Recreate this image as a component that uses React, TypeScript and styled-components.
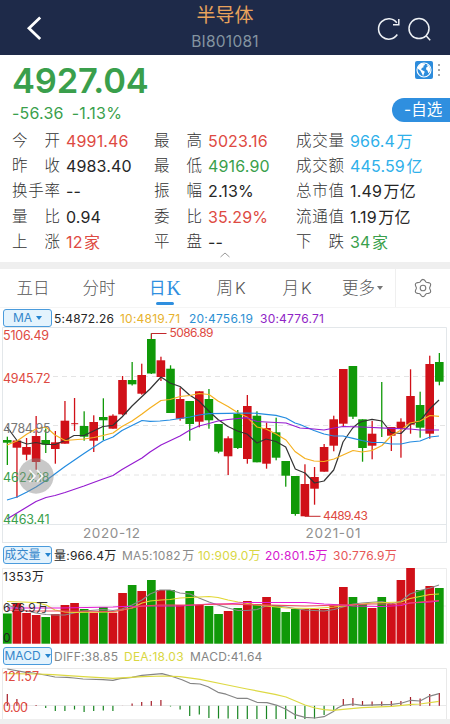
import React from "react";
import styled, { createGlobalStyle } from "styled-components";

const GlobalStyle = createGlobalStyle`
  * { box-sizing: border-box; }
  body { margin: 0; background: #fff; }
`;

const RED = "#de4a42";
const GREEN = "#3a9f4c";
const INK = "#262626";
const SKY = "#2eb0ea";
const BLUE = "#2f8fdf";
const UP = "#d01018";
const DOWN = "#109908";

const Screen = styled.div`
  width: 450px;
  height: 724px;
  overflow: hidden;
  display: flex;
  flex-direction: column;
  background: #fff;
  font-family: Inter, "Noto Sans CJK SC", sans-serif;
  color: ${INK};
`;

const Header = styled.header`
  height: 55px;
  flex: none;
  display: grid;
  grid-template-columns: 80px 1fr 80px;
  background: #1e2a49;
`;

const BackButton = styled.div`
  padding: 16px 0 0 26px;
`;

const TitleBlock = styled.div`
  display: flex;
  flex-direction: column;
  align-items: center;
`;

const Title = styled.div`
  margin-top: 4px;
  height: 24px;
  line-height: 24px;
  font-size: 19px;
  color: #e8a25c;
`;

const Code = styled.div`
  margin-top: 4px;
  height: 20px;
  line-height: 20px;
  font-size: 15.5px;
  letter-spacing: 0.25px;
  color: #8494a0;
`;

const HeaderActions = styled.div`
  display: flex;
  gap: 3px;
  padding: 16px 0 0 6px;
`;

const Summary = styled.section`
  height: 73px;
  flex: none;
  display: flex;
  justify-content: space-between;
  padding-left: 12px;
`;

const PriceBlock = styled.div`
  color: ${GREEN};
`;

const Price = styled.div`
  margin-top: 5px;
  height: 42px;
  line-height: 42px;
  font-size: 34.5px;
  font-weight: 600;
  letter-spacing: -0.2px;
`;

const Change = styled.div`
  display: flex;
  gap: 8px;
  height: 22px;
  line-height: 22px;
  font-size: 16px;
  letter-spacing: 0.2px;
`;

const SideTools = styled.div`
  display: flex;
  flex-direction: column;
  align-items: flex-end;
`;

const ToolPair = styled.div`
  display: flex;
  align-items: center;
  gap: 4px;
  height: 18px;
  margin: 6px 9px 0 0;
`;

const WatchPill = styled.div`
  margin-top: 19px;
  width: 58px;
  height: 24px;
  padding-left: 12px;
  border-radius: 12px 0 0 12px;
  background: ${BLUE};
  color: #fff;
  font-size: 15.5px;
  line-height: 24px;
  white-space: nowrap;
`;

const Quotes = styled.section`
  height: 134px;
  flex: none;
  display: grid;
  grid-template-columns: 142px 142px 1fr;
  grid-template-rows: repeat(5, 25.2px);
  padding-left: 12px;
`;

const Quote = styled.div`
  display: flex;
  align-items: center;
  height: 26px;
  font-size: 16px;
  line-height: 26px;
  white-space: nowrap;
`;

const QuoteLabel = styled.div`
  width: 48px;
  margin-right: 6px;
  display: flex;
  justify-content: space-between;
  font-size: 15.5px;
  font-weight: 300;
  color: #333;
`;

const QuoteValue = styled.div<{ $color?: string }>`
  color: ${(p) => p.$color || INK};
  letter-spacing: 0.15px;
`;

const Unit = styled.span`
  margin-left: 1.5px;
`;

const Band = styled.div`
  height: 7px;
  flex: none;
  background: #efefef;
  display: flex;
  justify-content: center;
`;

const Handle = styled.svg`
  display: block;
  margin-top: -11px;
`;

const Tabs = styled.nav`
  height: 39px;
  flex: none;
  display: grid;
  grid-template-columns: 66px 66px 66px 66px 66px 65px 1fr;
  border-bottom: 1px solid #f5f5f5;
`;

const Tab = styled.div<{ $active?: boolean }>`
  display: flex;
  flex-direction: column;
  align-items: center;
  font-size: 16.5px;
  font-weight: ${(p) => (p.$active ? 400 : 300)};
  line-height: 38px;
  height: 38px;
  color: ${(p) => (p.$active ? BLUE : "#555")};
  white-space: nowrap;
  &::after {
    content: "";
    display: ${(p) => (p.$active ? "block" : "none")};
    width: 18px;
    height: 3px;
    margin-top: -5px;
    border-radius: 2px;
    background: ${BLUE};
  }
`;

const TabRow = styled.div<{ $gap?: number }>`
  display: flex;
  align-items: center;
  height: 38px;
  gap: ${(p) => p.$gap ?? 2}px;
`;

const SerifK = styled.span`
  font-family: "Liberation Serif", serif;
  font-size: 20px;
  font-weight: 400;
`;

const Settings = styled.div`
  display: flex;
  align-items: center;
  justify-content: center;
  border-left: 1px solid #efefef;
`;

const Legend = styled.div<{ $columns: string; $height: number; $top: number }>`
  height: ${(p) => p.$height}px;
  flex: none;
  display: grid;
  grid-template-columns: 51px ${(p) => p.$columns};
  align-items: start;
  padding: ${(p) => p.$top}px 0 0 3px;
`;

const Picker = styled.div`
  width: 49px;
  height: 18px;
  display: flex;
  align-items: center;
  justify-content: center;
  gap: 4px;
  border: 1px solid #4a9bdc;
  border-radius: 3px;
  background: #e4f3fd;
  color: #3587cb;
  font-size: 12px;
  line-height: 16px;
  white-space: nowrap;
`;

const Caret = styled.i<{ $color: string; $size: number }>`
  width: 0;
  height: 0;
  border-left: ${(p) => p.$size}px solid transparent;
  border-right: ${(p) => p.$size}px solid transparent;
  border-top: ${(p) => p.$size + 1}px solid ${(p) => p.$color};
`;

const LegendItem = styled.div<{ $color: string }>`
  color: ${(p) => p.$color};
  font-size: 12px;
  letter-spacing: 0.22px;
  line-height: 19px;
  white-space: nowrap;
`;

const Plot = styled.svg`
  display: block;
  flex: none;
  overflow: visible;
`;

const Footer = styled.div`
  flex: 1;
  background: #efefef;
`;

const QUOTES: [string, string, string?, string?][] = [
  ["今开", "4991.46", "", RED], ["最高", "5023.16", "", RED], ["成交量", "966.4", "万", SKY],
  ["昨收", "4983.40"], ["最低", "4916.90", "", GREEN], ["成交额", "445.59", "亿", SKY],
  ["换手率", "--"], ["振幅", "2.13%"], ["总市值", "1.49", "万亿"],
  ["量比", "0.94"], ["委比", "35.29%", "", RED], ["流通值", "1.19", "万亿"],
  ["上涨", "12", "家", RED], ["平盘", "--"], ["下跌", "34", "家", GREEN],
];

// Body top, body bottom, wick top, wick bottom; "r" rises and "g" falls.
type Candle = ["r" | "g", number, number, number, number];
const CANDLES: Candle[] = [
  ["g", 440, 442.7, 436.7, 465], ["r", 440.5, 447.7, 440, 497.7], ["r", 447, 454.7, 438, 460.3],
  ["r", 436, 462, 416, 469.7], ["g", 440, 444.7, 428.5, 453], ["r", 442.3, 449, 431, 463.7],
  ["r", 420.7, 443.7, 401, 443.7], ["r", 423.2, 424.2, 398, 431], ["g", 426, 436.7, 411.3, 440.7],
  ["r", 422, 440.7, 415.3, 452], ["g", 417, 420.3, 398.3, 440.3], ["r", 415.7, 428.7, 414.3, 428.7],
  ["r", 380, 414.3, 376, 415], ["g", 380, 384.3, 362, 385.5], ["r", 375, 393.7, 363.7, 394.7],
  ["g", 339, 373.5, 333.3, 374], ["r", 360.3, 377, 356.7, 381], ["g", 368.7, 413, 365.3, 413],
  ["r", 399, 418.7, 387.7, 420.7], ["g", 401, 424, 401, 440.7], ["r", 391.3, 421.7, 391.3, 427.3],
  ["g", 399, 420.3, 389, 428.7], ["g", 424, 451.7, 424, 453.3], ["r", 438.3, 456.3, 436.3, 475],
  ["g", 414, 448, 410, 449], ["r", 406, 459, 395, 463.7], ["g", 415.7, 462.3, 411.3, 462.3],
  ["r", 428, 463.7, 422.7, 468.7], ["g", 432.3, 457.7, 417.7, 460.3], ["g", 461, 475.7, 461, 486.7],
  ["g", 476, 514, 476, 515.7], ["r", 484, 516.3, 464.3, 516.3], ["r", 477, 488.7, 467, 504.7],
  ["r", 447, 471.7, 444, 471.7], ["r", 419.3, 445.7, 415.7, 451.3], ["r", 369, 423.7, 369, 427],
  ["g", 366, 416.7, 366, 419], ["g", 419.3, 448, 419.3, 461.7], ["r", 433.7, 445.7, 421, 459.3],
  ["g", 418.8, 419.8, 382, 437], ["r", 427, 435.7, 427, 451], ["r", 421.7, 428.7, 418.3, 457.7],
  ["r", 396, 424.7, 369.3, 433.7], ["g", 405, 427.7, 391.7, 437.7], ["r", 364, 433.7, 355.7, 438.7],
  ["g", 362, 381.7, 353, 385.3],
];

const VOLUME_TOPS = [
  613.5, 603, 613, 615, 617, 614, 605, 603, 609, 612.7, 607, 612.7, 593, 585, 591, 580, 590, 590, 605, 591, 605, 606, 614,
  611, 608, 601, 604, 597, 605, 612, 609, 609, 609, 609, 605.5, 587, 597, 604, 608, 597, 604, 580, 568, 590, 586, 588,
];

const MACD_ENDS = [
  694, 699, 703.5, 705, 708, 711, 711, 709.5, 712, 711, 710.5, 711, 705.7, 703.5, 702, 701, 700, 706.5, 709.5, 716, 714.5,
  718, 718.5, 718.5, 719, 719, 719, 719, 719, 719, 719, 719, 718.5, 715, 710, 699, 698, 701, 701.5, 701.5, 701, 701, 697,
  698.5, 694, 693,
];

const MA5 = "7,427 17,440.5 27,444 36,442.5 46,444.5 55,444.5 65,440.5 74,435.5 84,435.5 93.5,431 103,426.5 113,425.3 122,417 132,406 142,396.5 150,389 161,377 170,383 180,386.5 189.5,395 199,401 208.7,411 218,419.5 228,426.5 237.5,431 247,434 257,443 266,439 276,441.5 285.7,447 295.3,469 300,471 305,473 314.5,483 324,481 333.7,470 338,458 343,442 352.7,428 358,423.5 362,421.5 372,419.3 382,421 391,432.5 401,433.5 410.5,424 420,421 429.7,409 439,400";
const MA10 = "7,445 17,441 27,434 36,429 46,427 55,435 65,440.5 84,439 94,437.5 103,435.5 113,433 122,426.5 132,421 142,414 150,408 161,400.5 170,399.5 180,396.5 190,395.5 199,393.5 209,394.5 218,401 228,406.5 237.5,412.5 247,417 257,427 266,429 276,434 286,440 295,451.5 300,455 305,458.5 314,461 324,461.5 334,459 343,455 353,450.5 362,452 372,450.5 382,445.5 391,436 401,430 410,423 420,421 430,415.5 439,416.3";
const MA20 = "7,500 17,497 27,492 36,487 46,480.5 65,466.5 84,453.5 103,441 113,437 122,430.5 132,425.5 142,420.5 150,421.3 160,421 170,420 180,418.5 190,417 199,415 209,413.7 228,413.3 247,413 257,413.3 266,414.3 276,415.3 286,418 295,423 300,424.5 314,430.5 324,434 334,436 343,436 353,438.3 362,440.5 372,442.5 382,442.5 391,444 401,444 410,442 420,441 430,437 439,436";
const MA30 = "7,519 17,513 36,501.5 46,497.5 55,495.5 65,492.5 84,486 103,479 113,475.5 122,469.5 142,458 150,452 161,445 180,436 190,430 199,426 209,423.5 218,421 228,419.5 247,417.7 257,421.5 266,422 286,423 300,428 314,429 324,430 334,428 343,426.5 362,427 391,428.3 410,429 420,430 439,430";

const VOL5 = "7,605 17,608 27,611 36,613 46,614.5 55,615 65,615 74,613 84,611 103,609.5 113,610.5 122,609 132,605 142,600 150,594 160,590 170,590 180,593 190,594 199,598 209,602 218,605 228,608 238,610.5 247,610.5 257,609.5 266,606 276,606 286,607 295,608.5 305,610 314,610.5 324,611 334,609.5 343,607 353,604 362,603 382,601.5 391,604 401,601 410,594 420,590.5 430,588 439,585";
const VOL10 = "7,601.5 36,602.5 46,605 55,610 65,612 74,612.5 113,612 122,610 132,608 142,603 150,601 161,600 170,599.5 180,598 190,597.5 209,596.5 218,597.5 228,600 238,602 257,605 286,608 314,608.5 334,607 353,605 372,603 401,602 410,598.5 430,594.5 439,594";
const VOL20 = "7,608 60,608 113,607 122,606.5 150,606 180,606 209,604 225,604 247,602.5 305,602.5 324,604 343,605 353,606 382,606.5 401,605.5 410,603 430,602 439,601";
const VOL30 = "7,610 30,611 60,611 113,611.5 122,610 142,606 160,605 190,605 225,604 305,606 343,605 372,604 401,604 420,602 439,600.5";

const DIFF = "7.3,669 26,672.3 33,673 45,675 55,677 67,677.3 74,678 83,679 103,679.7 113,680.3 120,678.7 132,677.3 142,675.3 162,673.7 173,676.7 182,679.7 190,683.3 200,684 208,686.7 218,692.3 226,694.2 237,698.3 247,698.3 257,702.3 267,702.7 277,705.3 286,709.3 295,714.7 305,717.3 315,718 324,716.7 333,711.7 338,707.7 343,705.3 353,704 362,705.3 382,704.7 392,704.3 402,703 411,700.3 420,701 429,696.3 439,693.7";
const DEA = "7.3,673.7 37,674 53,674.7 83,676.7 113,678.3 143,676.7 163,676 180,676.7 200,679.3 225,684.5 247,689 275,694.3 286,697 305,705 315,708 324,709.7 333,710.3 343,709.3 362,707.7 392,706.3 412,704.3 420,704 439,701.3";

const xAt = (i: number) => 7.3 + i * 9.6;

const AxisText: React.FC<{ x: number; y: number; color: string; size?: number; width?: number; children: string }> = ({
  x, y, color, size = 12.5, width, children,
}) => (
  <text
    x={x} y={y} fill={color} fontSize={size} textLength={width}
    fontFamily='Inter, "Noto Sans CJK SC", sans-serif'
  >
    {children}
  </text>
);

const Line: React.FC<{ points: string; color: string; width?: number }> = ({ points, color, width = 1.2 }) => (
  <polyline points={points} fill="none" stroke={color} strokeWidth={width} strokeLinejoin="round" />
);

const CandlePlot = () => (
  <Plot width="450" height="216" viewBox="0 327 450 216">
    <path d="M2.5 543V327.5H446.5V543M2.5 524.5H446.5M2.5 542.5H446.5" fill="none" stroke="#e3e7ea" />
    {[376.5, 425.5, 475].map((y) => (
      <path key={y} d={`M53 ${y}H446`} stroke="#e4e4e4" strokeDasharray="5 4" />
    ))}
    {CANDLES.map(([kind, top, bottom, high, low], i) => {
      const color = kind === "r" ? UP : DOWN;
      return (
        <g key={i} fill={color}>
          <rect x={xAt(i) - 0.6} y={high} width="1.3" height={low - high} />
          {bottom - top > 1.1 ? (
            <rect x={xAt(i) - 4.3} y={top} width="8.6" height={bottom - top} />
          ) : (
            kind === "r" && <rect x={xAt(i) - 3.3} y={top} width="7" height="1" />
          )}
        </g>
      );
    })}
    <Line points={MA5} color="#333" />
    <Line points={MA10} color="#f5b01f" />
    <Line points={MA20} color="#228be0" />
    <Line points={MA30} color="#951bd0" />
    <AxisText x={3} y={340} color={RED} width={46}>5106.49</AxisText>
    <AxisText x={3} y={383} color={RED} width={47.5}>4945.72</AxisText>
    <AxisText x={3} y={432.5} color="#777" width={47.5}>4784.95</AxisText>
    <AxisText x={3} y={481.5} color={GREEN} width={46.5}>4624.18</AxisText>
    <AxisText x={3} y={523.5} color={GREEN} width={46.5}>4463.41</AxisText>
    <circle cx="36" cy="476" r="17.7" fill="#8b8b8b" fillOpacity="0.47" />
    <path d="M29.5 470l5.5 6-5.5 6M37 470l5.5 6-5.5 6" fill="none" stroke="#fff" strokeOpacity="0.9" strokeWidth="1.6" />
    <path d="M151.5 339V333.5H166.5" fill="none" stroke="#c3272b" />
    <AxisText x={169.5} y={336.6} color={RED} size={12} width={44}>5086.89</AxisText>
    <path d="M305 516.3H320.5" stroke="#c3272b" />
    <AxisText x={323} y={520} color={RED} size={12} width={45}>4489.43</AxisText>
    <AxisText x={83} y={538} color="#909090" size={13.5} width={57}>2020-12</AxisText>
    <AxisText x={305.5} y={538} color="#909090" size={13.5} width={55}>2021-01</AxisText>
  </Plot>
);

const VolumePlot = () => (
  <Plot width="450" height="76" viewBox="0 568 450 76">
    <path d="M2.5 644V568.5H446.5V644M2.5 606H446" fill="none" stroke="#ececec" />
    {VOLUME_TOPS.map((top, i) => (
      <rect key={i} x={xAt(i) - 4.3} y={top} width="8.7" height={643.7 - top} fill={CANDLES[i][0] === "r" ? UP : DOWN} />
    ))}
    <Line points={VOL5} color="#888" />
    <Line points={VOL10} color="#e2d733" />
    <Line points={VOL20} color="#e51ad6" />
    <Line points={VOL30} color="#f04b62" />
    <AxisText x={3} y={581} color={INK} size={12} width={41}>1353万</AxisText>
    <AxisText x={3} y={612.3} color="#333" size={12} width={45}>676.9万</AxisText>
    <AxisText x={3} y={642} color="#222" size={12}>0</AxisText>
  </Plot>
);

const MacdPlot = () => (
  <Plot width="450" height="51" viewBox="0 668 450 51">
    <path d="M2.5 719V668.5H446.5V719M2.5 705.5H446" fill="none" stroke="#e9e9e9" />
    {MACD_ENDS.map((end, i) => (
      <rect
        key={i} x={xAt(i) - 0.6} y={Math.min(end, 705.8)} width="1.2" height={Math.abs(end - 705.8)}
        fill={end < 705.8 ? "#a51d28" : "#198522"}
      />
    ))}
    <Line points={DIFF} color="#858585" />
    <Line points={DEA} color="#ddd943" />
    <AxisText x={3} y={681.3} color={RED} size={12.5} width={36}>121.57</AxisText>
    <AxisText x={3} y={712} color={RED} size={12.5} width={25}>0.00</AxisText>
  </Plot>
);

const GEAR = Array.from({ length: 49 }, (_, i) => {
  const angle = (i / 48) * Math.PI * 2;
  const radius = 7.6 + 1.0 * Math.cos(angle * 6);
  return `${i ? "L" : "M"}${(10 + radius * Math.sin(angle)).toFixed(2)} ${(10 - radius * Math.cos(angle)).toFixed(2)}`;
}).join("") + "Z";

export default function App() {
  return (
    <>
      <GlobalStyle />
      <Screen>
        <Header>
          <BackButton>
            <svg width="18" height="26" fill="none" stroke="#fff" strokeWidth="2.8">
              <path d="M14.2 1.5L3 12.2L14.2 23" />
            </svg>
          </BackButton>
          <TitleBlock>
            <Title>半导体</Title>
            <Code>BI801081</Code>
          </TitleBlock>
          <HeaderActions>
            <svg width="28" height="26" fill="none" stroke="#eef1f5" strokeWidth="1.5">
              <path d="M20.8 6.7A10.2 10.2 0 1 0 21.3 18.5" />
              <path d="M22.8 3V8.8H17" />
            </svg>
            <svg width="26" height="26" fill="none" stroke="#eef1f5" strokeWidth="1.5">
              <circle cx="12" cy="12.6" r="10" />
              <path d="M19.1 19.8L23.2 24.2" />
            </svg>
          </HeaderActions>
        </Header>

        <Summary>
          <PriceBlock>
            <Price>4927.04</Price>
            <Change><span>-56.36</span><span>-1.13%</span></Change>
          </PriceBlock>
          <SideTools>
            <ToolPair>
              <svg width="18" height="18">
                <rect width="18" height="18" rx="2" fill="#2d8cdc" />
                <circle cx="9" cy="9" r="7" fill="none" stroke="#fff" strokeWidth="1.1" />
                <path d="M3 5.4L6 2.5L9.5 2.6L10 4.1L8.4 4.7L8.6 6.3L6.8 7.1L6.2 8.8L7.9 9.4L9.8 10.7L9 12.6L8.1 15.3L6.8 12.2L5.3 9.6L2.8 7.8ZM11.5 4L14 4.8L15.2 7.5L14.9 10.4L13.3 12.3L12.6 9.7L11 8.3L11.4 6.3L12.8 5.7Z" fill="#fff" />
              </svg>
              <svg width="4" height="14" fill="#888">
                <circle cx="2" cy="2" r="1" /><circle cx="2" cy="7" r="1" /><circle cx="2" cy="12" r="1" />
              </svg>
            </ToolPair>
            <WatchPill>-自选</WatchPill>
          </SideTools>
        </Summary>

        <Quotes>
          {QUOTES.map(([label, value, unit, color]) => (
            <Quote key={label}>
              <QuoteLabel>{Array.from(label).map((c) => <span key={c}>{c}</span>)}</QuoteLabel>
              <QuoteValue $color={color}>{value}{unit && <Unit>{unit}</Unit>}</QuoteValue>
            </Quote>
          ))}
        </Quotes>

        <Band>
          <Handle width="12" height="8" fill="none" stroke="#999">
            <path d="M1.5 6L6 2L10.5 6" />
          </Handle>
        </Band>

        <Tabs>
          <Tab>五日</Tab>
          <Tab>分时</Tab>
          <Tab $active><TabRow $gap={1}><span>日</span><SerifK>K</SerifK></TabRow></Tab>
          <Tab><TabRow>周<span>K</span></TabRow></Tab>
          <Tab><TabRow>月<span>K</span></TabRow></Tab>
          <Tab><TabRow>更多<Caret $color="#777" $size={3} /></TabRow></Tab>
          <Settings>
            <svg width="20" height="20" fill="none" stroke="#777" strokeWidth="1.1">
              <path d={GEAR} />
              <circle cx="10" cy="10" r="2.8" />
            </svg>
          </Settings>
        </Tabs>

        <Legend $height={19} $top={1} $columns="66px 69px 71px 1fr">
          <Picker>MA<Caret $color="#2584cf" $size={3} /></Picker>
          <LegendItem $color={INK}>5:4872.26</LegendItem>
          <LegendItem $color="#e7b22d">10:4819.71</LegendItem>
          <LegendItem $color="#2c8fd3">20:4756.19</LegendItem>
          <LegendItem $color="#8f25c6">30:4776.71</LegendItem>
        </Legend>
        <CandlePlot />

        <Legend $height={25} $top={3} $columns="68px 76px 67px 68px 1fr">
          <Picker>成交量<Caret $color="#2584cf" $size={3} /></Picker>
          <LegendItem $color={INK}>量:966.4万</LegendItem>
          <LegendItem $color="#8a8a8a">MA5:1082<Unit>万</Unit></LegendItem>
          <LegendItem $color="#d9d742">10:909.0万</LegendItem>
          <LegendItem $color="#d617cf">20:801.5万</LegendItem>
          <LegendItem $color="#e75656">30:776.9万</LegendItem>
        </Legend>
        <VolumePlot />

        <Legend $height={24} $top={3} $columns="70px 66px 1fr">
          <Picker>MACD<Caret $color="#2584cf" $size={3} /></Picker>
          <LegendItem $color="#858585">DIFF:38.85</LegendItem>
          <LegendItem $color="#d9d742">DEA:18.03</LegendItem>
          <LegendItem $color="#858585">MACD:41.64</LegendItem>
        </Legend>
        <MacdPlot />
        <Footer />
      </Screen>
    </>
  );
}
